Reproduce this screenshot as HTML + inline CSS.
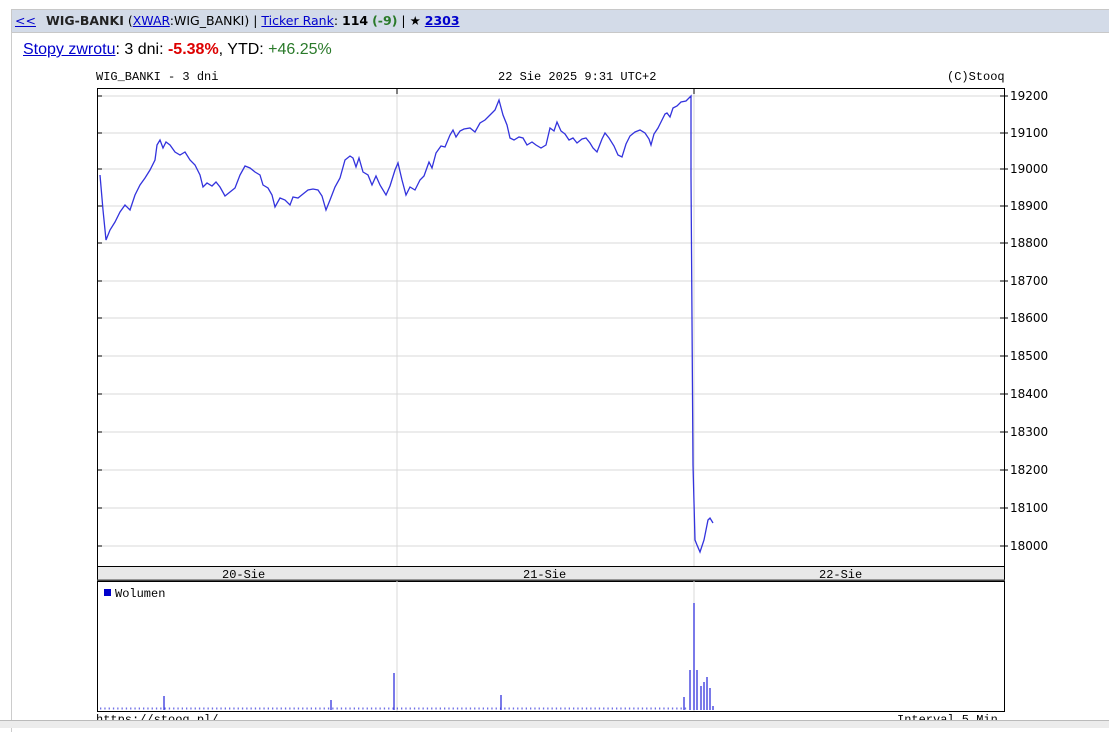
<!DOCTYPE html>
<html><head><meta charset="utf-8"><style>
body{margin:0;width:1109px;height:728px;overflow:hidden;background:#fff;font-family:"Liberation Sans",sans-serif;position:relative}
a{color:#0000cc}
.hdr{position:absolute;left:11px;top:9px;width:1098px;height:22px;background:#d3dbe8;border:1px solid #c8c8c8;font-family:"DejaVu Sans",sans-serif;font-size:12.5px;line-height:22px;white-space:nowrap}
.box{position:absolute;left:11px;top:32px;width:1097px;height:700px;border-left:1px solid #ccc}
</style></head><body>
<div class="hdr"><span style="margin-left:3px"><a href="#">&lt;&lt;</a></span><b style="margin-left:10px;color:#222">WIG-BANKI</b> (<a href="#">XWAR</a>:WIG_BANKI) | <a href="#">Ticker Rank</a>: <b>114</b> <b style="color:#2a7a2a">(-9)</b> | ★ <b><a href="#">2303</a></b></div>
<div class="box"></div>
<div style="position:absolute;left:23px;top:41px;font-size:16px"><a href="#">Stopy zwrotu</a>: 3 dni: <b style="color:#d00">-5.38%</b>, YTD: <span style="color:#2a7a2a">+46.25%</span></div>
<svg style="position:absolute;left:0;top:0" width="1109" height="728" font-family="Liberation Mono,monospace" font-size="12">
<text x="96" y="80">WIG_BANKI - 3 dni</text>
<text x="498" y="80">22 Sie 2025 9:31 UTC+2</text>
<text x="947" y="80">(C)Stooq</text>
<rect x="97.5" y="88.5" width="907" height="478" fill="#fff" stroke="#000"/>
<g stroke="#d8d8d8">
<line x1="98" x2="1004" y1="96" y2="96"/><line x1="98" x2="1004" y1="133" y2="133"/><line x1="98" x2="1004" y1="169" y2="169"/><line x1="98" x2="1004" y1="206" y2="206"/><line x1="98" x2="1004" y1="243" y2="243"/><line x1="98" x2="1004" y1="281" y2="281"/><line x1="98" x2="1004" y1="318" y2="318"/><line x1="98" x2="1004" y1="356" y2="356"/><line x1="98" x2="1004" y1="394" y2="394"/><line x1="98" x2="1004" y1="432" y2="432"/><line x1="98" x2="1004" y1="470" y2="470"/><line x1="98" x2="1004" y1="508" y2="508"/><line x1="98" x2="1004" y1="546" y2="546"/>
<line x1="397" x2="397" y1="89" y2="711"/><line x1="694" x2="694" y1="89" y2="711"/>
</g>
<g stroke="#000">
<line x1="98" x2="102" y1="96" y2="96"/><line x1="98" x2="102" y1="133" y2="133"/><line x1="98" x2="102" y1="169" y2="169"/><line x1="98" x2="102" y1="206" y2="206"/><line x1="98" x2="102" y1="243" y2="243"/><line x1="98" x2="102" y1="281" y2="281"/><line x1="98" x2="102" y1="318" y2="318"/><line x1="98" x2="102" y1="356" y2="356"/><line x1="98" x2="102" y1="394" y2="394"/><line x1="98" x2="102" y1="432" y2="432"/><line x1="98" x2="102" y1="470" y2="470"/><line x1="98" x2="102" y1="508" y2="508"/><line x1="98" x2="102" y1="546" y2="546"/>
<line x1="1000" x2="1008" y1="96" y2="96"/><line x1="1000" x2="1008" y1="133" y2="133"/><line x1="1000" x2="1008" y1="169" y2="169"/><line x1="1000" x2="1008" y1="206" y2="206"/><line x1="1000" x2="1008" y1="243" y2="243"/><line x1="1000" x2="1008" y1="281" y2="281"/><line x1="1000" x2="1008" y1="318" y2="318"/><line x1="1000" x2="1008" y1="356" y2="356"/><line x1="1000" x2="1008" y1="394" y2="394"/><line x1="1000" x2="1008" y1="432" y2="432"/><line x1="1000" x2="1008" y1="470" y2="470"/><line x1="1000" x2="1008" y1="508" y2="508"/><line x1="1000" x2="1008" y1="546" y2="546"/>
<line x1="397" x2="397" y1="89" y2="94"/><line x1="694" x2="694" y1="89" y2="94"/>
</g>
<g font-family="DejaVu Sans,sans-serif" font-size="12">
<text x="1010" y="100">19200</text><text x="1010" y="137">19100</text><text x="1010" y="173">19000</text><text x="1010" y="210">18900</text><text x="1010" y="247">18800</text><text x="1010" y="285">18700</text><text x="1010" y="322">18600</text><text x="1010" y="360">18500</text><text x="1010" y="398">18400</text><text x="1010" y="436">18300</text><text x="1010" y="474">18200</text><text x="1010" y="512">18100</text><text x="1010" y="550">18000</text>
</g>
<rect x="97.5" y="566.5" width="907" height="14" fill="#e8e8e8" stroke="#000"/>
<line x1="97" x2="1005" y1="580.5" y2="580.5" stroke="#444" stroke-width="2"/>
<text x="222" y="578">20-Sie</text><text x="523" y="578">21-Sie</text><text x="819" y="578">22-Sie</text>
<rect x="97.5" y="581.5" width="907" height="130" fill="none" stroke="#000"/>
<line x1="397" x2="397" y1="581" y2="711" stroke="#d8d8d8"/><line x1="694" x2="694" y1="581" y2="711" stroke="#d8d8d8"/>
<rect x="104" y="589" width="7" height="7" fill="#0000cc"/>
<text x="115" y="597">Wolumen</text>
<polyline fill="none" stroke="#3333dd" stroke-width="1.3" points="100,175 103,210 106,240 110,230 115,222 120,212 125,205 130,210 135,195 140,185 145,178 150,170 155,160 157,145 160,140 163,148 166,142 170,145 175,152 180,155 185,152 190,160 195,165 200,175 203,187 207,183 212,186 216,182 220,187 225,196 230,192 235,188 240,175 245,166 250,168 255,172 260,175 263,185 268,188 272,195 275,207 280,198 285,200 290,205 293,197 298,198 303,194 308,190 313,189 318,190 322,196 326,210 330,200 335,187 340,178 345,160 350,156 353,158 356,167 359,158 363,172 368,175 372,185 376,176 380,185 386,195 390,186 395,170 398,163 402,180 406,195 410,187 415,190 420,180 424,176 429,162 432,168 436,153 441,146 445,147 450,135 453,130 456,137 460,131 464,129 470,128 475,132 480,123 485,120 490,115 495,110 499,100 503,115 507,125 510,138 514,140 519,137 523,138 527,145 532,142 536,145 541,148 546,145 550,128 554,131 557,122 561,131 565,134 569,140 573,138 577,143 582,139 586,138 590,143 593,148 597,152 602,139 605,133 609,138 614,146 618,155 622,157 626,144 630,136 635,132 640,130 645,133 649,139 651,145 654,134 658,128 662,120 665,114 667,113 670,117 673,108 677,106 681,102 686,101 691,96 691,175 692,320 693,465 695,540 697,545 700,552 704,540 708,520 710,518 713,523"/>
<g stroke="#3333dd" stroke-width="1.3">
<line x1="100" x2="688" y1="708.5" y2="708.5" stroke-dasharray="1.3,3" stroke-width="2" opacity="0.7"/>
<line x1="164" x2="164" y1="696" y2="710"/><line x1="394" x2="394" y1="673" y2="710"/><line x1="501" x2="501" y1="695" y2="710"/><line x1="331" x2="331" y1="700" y2="710"/>
<line x1="684" x2="684" y1="697" y2="710"/><line x1="690" x2="690" y1="670" y2="710"/><line x1="694" x2="694" y1="603" y2="710"/><line x1="697" x2="697" y1="670" y2="710"/><line x1="701" x2="701" y1="686" y2="710"/><line x1="704" x2="704" y1="682" y2="710"/><line x1="707" x2="707" y1="677" y2="710"/><line x1="710" x2="710" y1="688" y2="710"/><line x1="713" x2="713" y1="706" y2="710"/>
</g>
<text x="96" y="723">https://stooq.pl/</text>
<text x="897" y="723">Interval 5 Min</text>
<rect x="0" y="720" width="1109" height="8" fill="#ececec"/>
<line x1="0" x2="1109" y1="720.5" y2="720.5" stroke="#bbb"/>
</svg>
</body></html>
